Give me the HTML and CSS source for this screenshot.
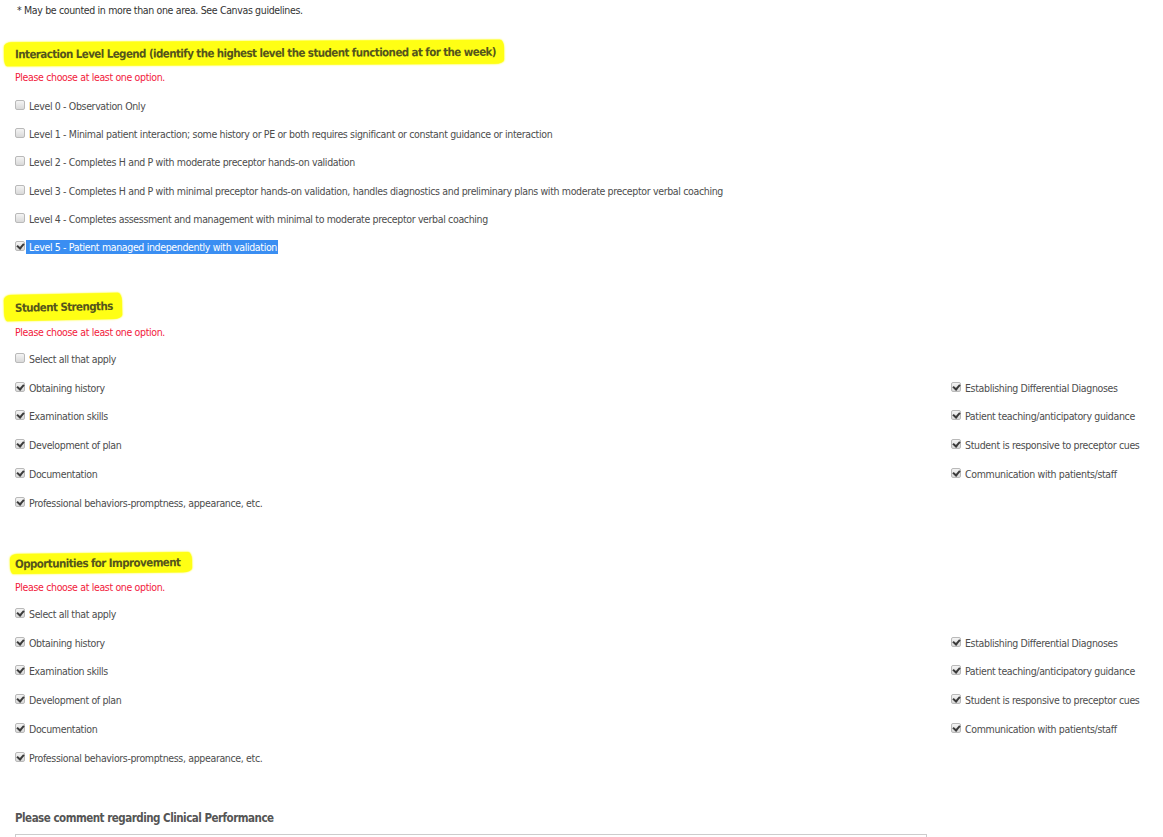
FILE: index.html
```html
<!DOCTYPE html>
<html lang="en">
<head>
    <meta charset="UTF-8">
    <title>Clinical Evaluation</title>
    <link rel="stylesheet" href="styles.css">
</head>
<body>
    <div class="form">
        <p class="note">* May be counted in more than one area. See Canvas guidelines.</p>

        <div class="section section-levels">
            <h2 class="heading"><span class="marker marker-long">Interaction Level Legend (identify the highest level the student functioned at for the week)</span></h2>
            <div class="error">Please choose at least one option.</div>
            <div class="options levels">
                <label class="option"><input type="checkbox"> <span>Level 0 - Observation Only</span></label>
                <label class="option"><input type="checkbox"> <span>Level 1 - Minimal patient interaction; some history or PE or both requires significant or constant guidance or interaction</span></label>
                <label class="option"><input type="checkbox"> <span>Level 2 - Completes H and P with moderate preceptor hands-on validation</span></label>
                <label class="option"><input type="checkbox"> <span>Level 3 - Completes H and P with minimal preceptor hands-on validation, handles diagnostics and preliminary plans with moderate preceptor verbal coaching</span></label>
                <label class="option"><input type="checkbox"> <span>Level 4 - Completes assessment and management with minimal to moderate preceptor verbal coaching</span></label>
                <label class="option"><input type="checkbox" checked> <span class="selected">Level 5 - Patient managed independently with validation</span></label>
            </div>
        </div>

        <div class="section section-strengths">
            <h2 class="heading"><span class="marker marker-short">Student Strengths</span></h2>
            <div class="error">Please choose at least one option.</div>
            <label class="option"><input type="checkbox"> <span>Select all that apply</span></label>
            <div class="columns">
                <div class="column">
                    <label class="option"><input type="checkbox" checked> <span>Obtaining history</span></label>
                    <label class="option"><input type="checkbox" checked> <span>Examination skills</span></label>
                    <label class="option"><input type="checkbox" checked> <span>Development of plan</span></label>
                    <label class="option"><input type="checkbox" checked> <span>Documentation</span></label>
                    <label class="option"><input type="checkbox" checked> <span>Professional behaviors-promptness, appearance, etc.</span></label>
                </div>
                <div class="column">
                    <label class="option"><input type="checkbox" checked> <span>Establishing Differential Diagnoses</span></label>
                    <label class="option"><input type="checkbox" checked> <span>Patient teaching/anticipatory guidance</span></label>
                    <label class="option"><input type="checkbox" checked> <span>Student is responsive to preceptor cues</span></label>
                    <label class="option"><input type="checkbox" checked> <span>Communication with patients/staff</span></label>
                </div>
            </div>
        </div>

        <div class="section section-improve">
            <h2 class="heading"><span class="marker marker-mid">Opportunities for Improvement</span></h2>
            <div class="error">Please choose at least one option.</div>
            <label class="option"><input type="checkbox" checked> <span>Select all that apply</span></label>
            <div class="columns">
                <div class="column">
                    <label class="option"><input type="checkbox" checked> <span>Obtaining history</span></label>
                    <label class="option"><input type="checkbox" checked> <span>Examination skills</span></label>
                    <label class="option"><input type="checkbox" checked> <span>Development of plan</span></label>
                    <label class="option"><input type="checkbox" checked> <span>Documentation</span></label>
                    <label class="option"><input type="checkbox" checked> <span>Professional behaviors-promptness, appearance, etc.</span></label>
                </div>
                <div class="column">
                    <label class="option"><input type="checkbox" checked> <span>Establishing Differential Diagnoses</span></label>
                    <label class="option"><input type="checkbox" checked> <span>Patient teaching/anticipatory guidance</span></label>
                    <label class="option"><input type="checkbox" checked> <span>Student is responsive to preceptor cues</span></label>
                    <label class="option"><input type="checkbox" checked> <span>Communication with patients/staff</span></label>
                </div>
            </div>
        </div>

        <div class="section section-comment">
            <label class="comment-label" for="comment">Please comment regarding Clinical Performance</label>
            <textarea id="comment" class="comment"></textarea>
        </div>
    </div>
</body>
</html>
```

FILE: styles.css
```css
body {
    margin: 0;
    font-family: 'DejaVu Sans Condensed', 'Liberation Sans', sans-serif;
    font-size: 10.5px;
    letter-spacing: -0.35px;
    color: #4d4d4d;
    background: #fff;
}
.form {
    padding: 0 15px;
}
.note {
    margin: 0 0 0 2px;
    line-height: 20px;
    color: #333;
}
.heading {
    margin: 0;
    font-size: 11.5px;
    font-weight: bold;
    letter-spacing: -0.6px;
    line-height: 24px;
    color: #55551c;
}
.marker {
    display: inline-block;
    margin-left: -11px;
    padding: 0 8px 0 11px;
    background: #ffff14;
    border-radius: 7px 4px 9px 3px / 5px 8px 4px 9px;
    box-shadow: 0 0 1.5px 0.5px #ffff40;
}
.marker-long {
    transform: rotate(-0.3deg);
}
.marker-short {
    padding-right: 9px;
    line-height: 26px;
    margin-top: -2px;
    transform: rotate(-1.2deg);
}
.marker-mid {
    margin-left: -5px;
    padding: 0 12px 0 5px;
    line-height: 20px;
    transform: rotate(-0.6deg);
}
.error {
    margin-top: 2px;
    line-height: 20px;
    color: #f2193c;
}
.section-levels {
    margin-top: 21px;
}
.section-strengths {
    margin-top: 34px;
}
.section-improve {
    margin-top: 34px;
}
.section-comment {
    margin-top: 36px;
}
.options {
    margin-top: 5px;
}
.option {
    display: flex;
    align-items: center;
    height: 28.2px;
    white-space: nowrap;
}
.section-strengths .option,
.section-improve .option {
    height: 28.8px;
}
.section-strengths > .option,
.section-improve > .option {
    margin-top: 3px;
    height: 28px;
}
.option input {
    appearance: none;
    -webkit-appearance: none;
    position: relative;
    width: 10px;
    height: 10px;
    margin: 0 4px 2px 0;
    border: 1px solid #b9b9b9;
    border-radius: 2px;
    background: linear-gradient(#f4f4f4, #d9d9d9);
    flex: none;
}
.option input:checked::after {
    content: '';
    position: absolute;
    left: 2px;
    top: 0;
    width: 3px;
    height: 5px;
    border: solid #3a3a3a;
    border-width: 0 2px 2px 0;
    transform: rotate(40deg);
}
.selected {
    background: #3a8ef2;
    color: #fff;
    padding: 0 1px 0 3px;
    margin-left: -3px;
    line-height: 14px;
}
.columns {
    display: grid;
    grid-template-columns: 1fr 197px;
}
.comment-label {
    display: block;
    line-height: 20px;
    font-size: 11.5px;
    font-weight: bold;
    letter-spacing: -0.5px;
    color: #555;
}
.comment {
    display: block;
    box-sizing: border-box;
    width: 912px;
    height: 100px;
    margin-top: 6px;
    border: 1px solid #ccc;
    resize: none;
}
```
